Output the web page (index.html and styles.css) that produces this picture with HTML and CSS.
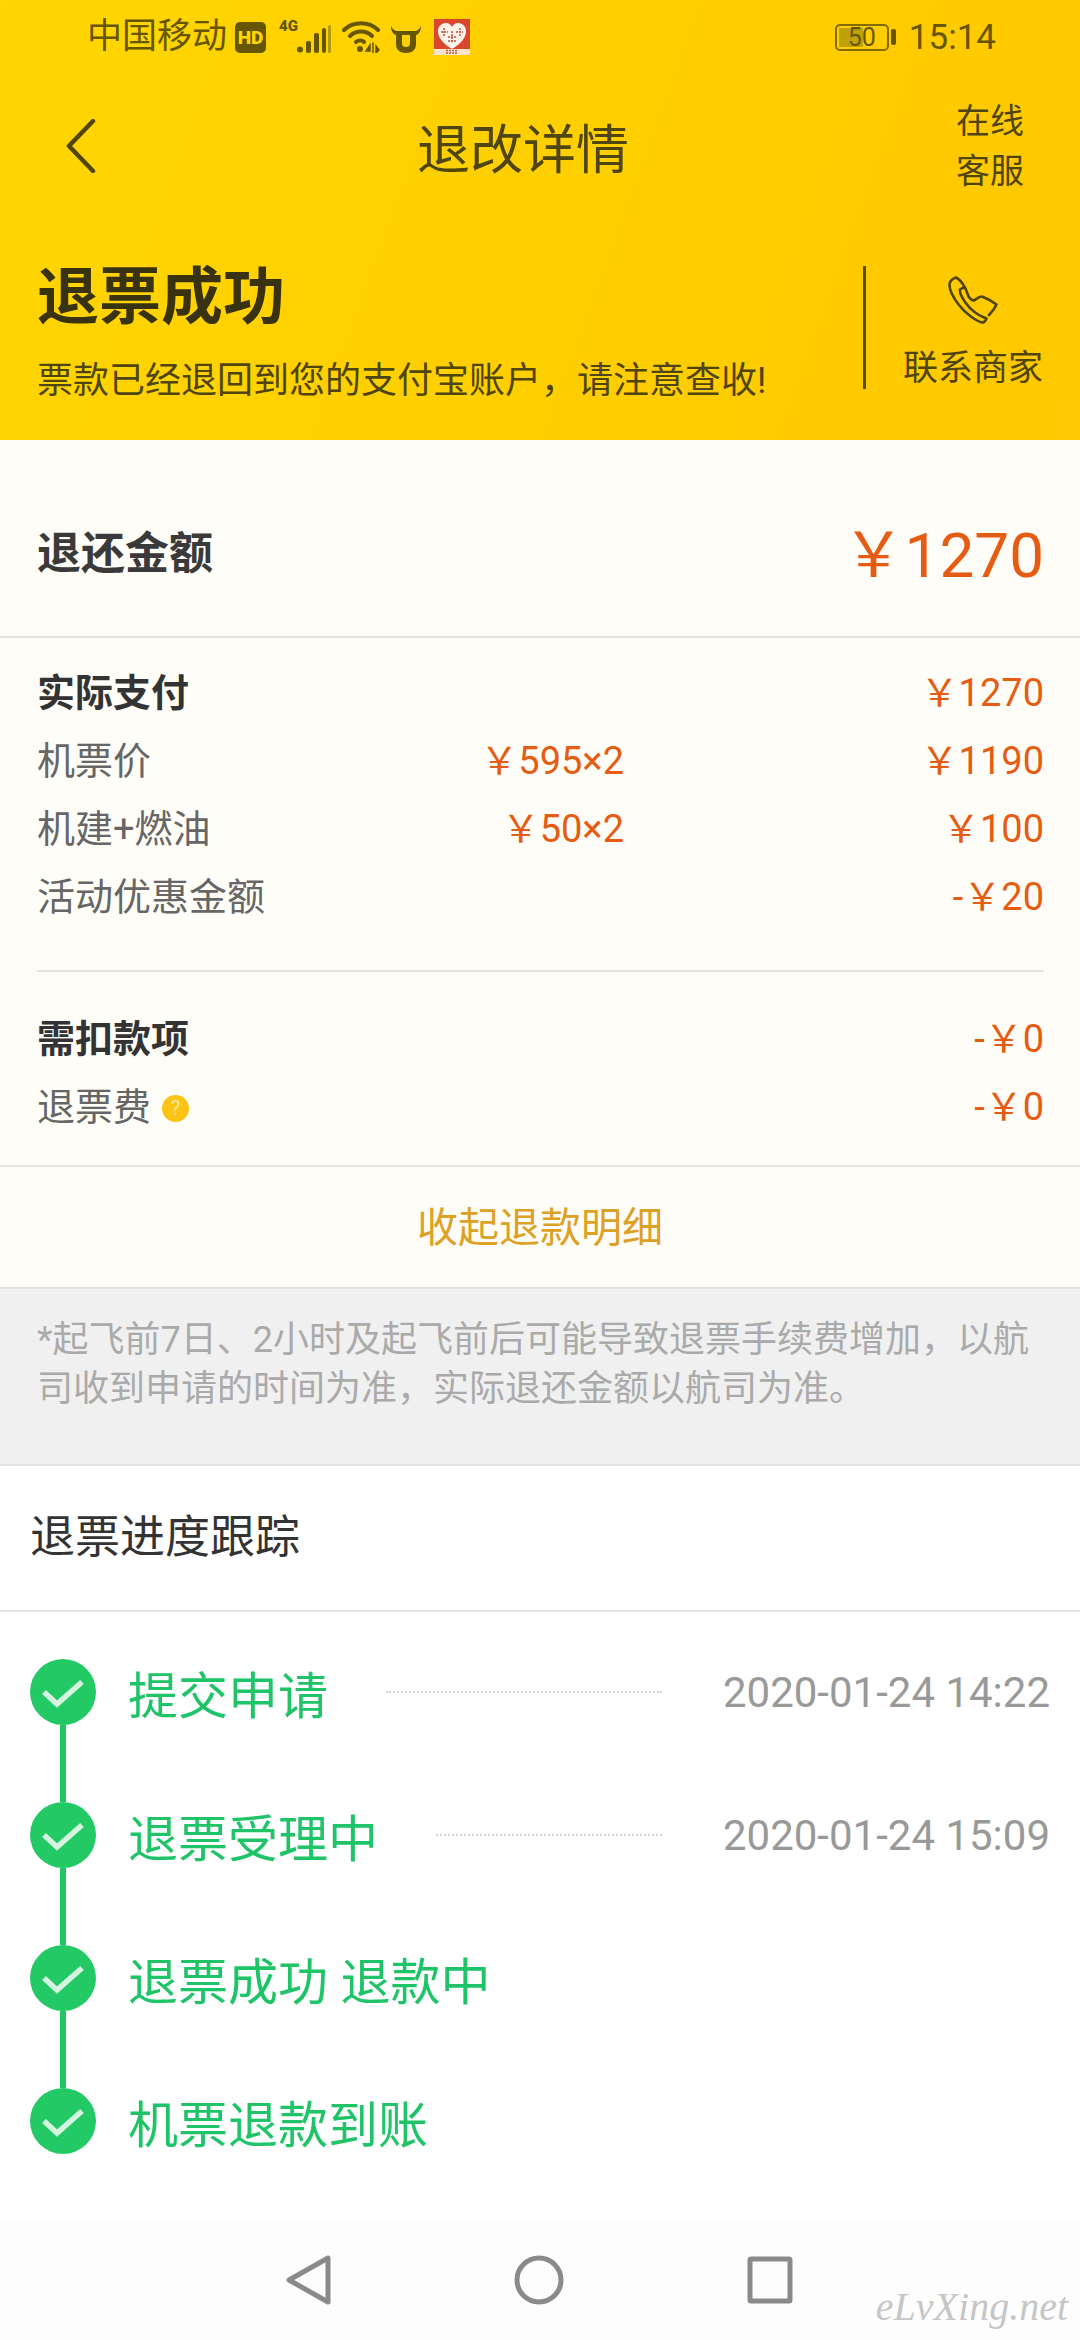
FILE: index.html

```html
<!DOCTYPE html>
<html lang="zh-CN">
<head>
  <meta charset="UTF-8" />
  <meta name="viewport" content="width=device-width, initial-scale=1.0"/>
  <title>退改详情</title>
  <link rel="stylesheet" href="styles.css">
</head>
<body>

  <header class="top">
    <div class="statusbar">
      <span class="carrier">中国移动</span>
      <span class="hd">HD</span>
      <span class="net">4G</span>
      <svg class="signal" width="34" height="28" viewBox="0 0 34 28">
        <circle cx="3" cy="24.5" r="3" fill="#665600"/>
        <rect x="9" y="16" width="5" height="12" rx="2" fill="#665600"/>
        <rect x="17" y="8" width="5" height="20" rx="2" fill="#665600"/>
        <rect x="25" y="3" width="4" height="25" rx="2" fill="#665600"/>
        <rect x="31" y="0" width="3" height="28" rx="1.5" fill="#b09a10"/>
      </svg>
      <svg class="wifi" width="38" height="32" viewBox="0 0 38 32" fill="none" stroke="#665600" stroke-width="4" stroke-linecap="round">
        <path d="M2 9C11 0 27 0 36 9"/>
        <path d="M8 15C14 9 24 9 30 15"/>
        <path d="M14 21C16.500 19 20 19 22 21" />
        <circle cx="18" cy="28" r="3" fill="#665600" stroke="none"/>
        <path d="M28 24l-4 6h4zM31 22v10M34 25l3 4-3 3z" fill="#665600" stroke-width="1.500"/>
      </svg>
      <svg class="cow" width="30" height="29" viewBox="0 0 30 29">
        <path d="M0 2C2 6 4 7 7 7H23C26 7 28 6 30 2C30 7 28 10 25 11V20C25 26 21 29 15 29S5 26 5 20V11C2 10 0 7 0 2ZM11 11V19C11 22 12.500 23 15 23S19 22 19 19V11Z" fill="#665600" fill-rule="evenodd"/>
      </svg>
      <svg class="app" width="36" height="36" viewBox="0 0 36 36">
        <rect width="36" height="36" fill="#d9482e"/>
        <rect y="30" width="36" height="6" fill="#fbe3cc"/>
        <path d="M18 30C8 24 4 18 4 12C4 7 8 4 12 4C15 4 17 6 18 8C19 6 21 4 24 4C28 4 32 7 32 12C32 18 28 24 18 30Z" fill="#fdf3ea"/>
        <path d="M10 9v8M7 13h7M26 9v8M22 13h7M18 12v12M14 18h8M14 22h8M12 31.500h12M12 34h12" stroke="#c4533f" stroke-width="1.500" fill="none" stroke-dasharray="2 1"/>
      </svg>
      <span class="battery"><span class="battery-level"></span><span class="battery-num">50</span></span>
      <span class="battery-nub"></span>
      <span class="clock">15:14</span>
    </div>

    <div class="toolbar">
      <svg class="back" width="30" height="54" viewBox="0 0 30 54" fill="none" stroke="#4f4510" stroke-width="4.500" stroke-linecap="round" stroke-linejoin="round">
        <path d="M27 2L3 27L27 52"/>
      </svg>
      <h1 class="page-title">退改详情</h1>
      <div class="service">在线<br>客服</div>
    </div>

    <div class="hero">
      <div class="hero-text">
        <h2>退票成功</h2>
        <p>票款已经退回到您的支付宝账户，请注意查收!</p>
      </div>
      <div class="hero-line"></div>
      <div class="contact">
        <svg width="50" height="48" viewBox="0 0 50 48" fill="none" stroke="#4f4510" stroke-width="2.600" stroke-linejoin="round" stroke-linecap="round">
          <path d="M8 1.500C5 2.500 1.500 5 1.500 9C1.500 14 4 20 11 29C18 38 28 45 34 46.500C36.500 47 37.500 45 38.500 42.500L35 41C32 40 23 35 17 26C13 20 11.500 16 12 13.500C13.500 12.500 15.500 11.500 16.500 11C14.500 7 11 3 8 1.500Z"/>
          <path d="M17 11.500L20 19C21 22 23 24 26 24.500C29 22.500 32 20 34 20.500C38 22 45 26 48.500 28.500C47 32 44 36 41 39"/>
        </svg>
        <span>联系商家</span>
      </div>
    </div>
  </header>

  <section class="refund">
    <span class="refund-label">退还金额</span>
    <span class="refund-value">￥1270</span>
  </section>

  <section class="detail">
    <div class="group">
      <div class="row row-head"><span>实际支付</span><span></span><span class="money">￥1270</span></div>
      <div class="row"><span>机票价</span><span class="money">￥595×2</span><span class="money">￥1190</span></div>
      <div class="row"><span>机建+燃油</span><span class="money">￥50×2</span><span class="money">￥100</span></div>
      <div class="row"><span>活动优惠金额</span><span></span><span class="money">-￥20</span></div>
    </div>
    <div class="group group-last">
      <div class="row row-head"><span>需扣款项</span><span></span><span class="money">-￥0</span></div>
      <div class="row"><span>退票费<i class="help">?</i></span><span></span><span class="money">-￥0</span></div>
    </div>
  </section>

  <div class="collapse">收起退款明细</div>

  <p class="note">*起飞前7日、2小时及起飞前后可能导致退票手续费增加，以航司收到申请的时间为准，实际退还金额以航司为准。</p>

  <main class="track">
    <div class="track-title">退票进度跟踪</div>
    <div class="steps">
      <div class="step">
        <div class="marker">
          <svg class="dot" width="66" height="66" viewBox="0 0 66 66"><circle cx="33" cy="33" r="33" fill="#22c964"/><path d="M14 33L27 45L52 23" fill="none" stroke="#d5f5e1" stroke-width="5.500"/></svg>
          <div class="connector"></div>
        </div>
        <div class="step-body">
          <span class="step-name">提交申请</span>
          <span class="dashes"></span>
          <span class="step-time">2020-01-24 14:22</span>
        </div>
      </div>
      <div class="step">
        <div class="marker">
          <svg class="dot" width="66" height="66" viewBox="0 0 66 66"><circle cx="33" cy="33" r="33" fill="#22c964"/><path d="M14 33L27 45L52 23" fill="none" stroke="#d5f5e1" stroke-width="5.500"/></svg>
          <div class="connector"></div>
        </div>
        <div class="step-body">
          <span class="step-name">退票受理中</span>
          <span class="dashes"></span>
          <span class="step-time">2020-01-24 15:09</span>
        </div>
      </div>
      <div class="step">
        <div class="marker">
          <svg class="dot" width="66" height="66" viewBox="0 0 66 66"><circle cx="33" cy="33" r="33" fill="#22c964"/><path d="M14 33L27 45L52 23" fill="none" stroke="#d5f5e1" stroke-width="5.500"/></svg>
          <div class="connector"></div>
        </div>
        <div class="step-body">
          <span class="step-name">退票成功 退款中</span>
        </div>
      </div>
      <div class="step step-last">
        <div class="marker">
          <svg class="dot" width="66" height="66" viewBox="0 0 66 66"><circle cx="33" cy="33" r="33" fill="#22c964"/><path d="M14 33L27 45L52 23" fill="none" stroke="#d5f5e1" stroke-width="5.500"/></svg>
        </div>
        <div class="step-body">
          <span class="step-name">机票退款到账</span>
        </div>
      </div>
    </div>
  </main>

  <nav class="navbar">
    <svg width="50" height="50" viewBox="0 0 50 50" fill="none" stroke="#8a8a8a" stroke-width="5" stroke-linejoin="round">
      <path d="M45 3V47L6 25Z" transform="translate(0 0)"/>
    </svg>
    <svg width="50" height="50" viewBox="0 0 50 50" fill="none" stroke="#8a8a8a" stroke-width="5">
      <circle cx="25" cy="25" r="22"/>
    </svg>
    <svg width="50" height="50" viewBox="0 0 50 50" fill="none" stroke="#8a8a8a" stroke-width="5" stroke-linejoin="round">
      <rect x="5" y="4" width="40" height="42" rx="1"/>
    </svg>
    <span class="watermark">eLvXing.net</span>
  </nav>

</body>
</html>
```

FILE: styles.css

```css
* {
  box-sizing: border-box;
}

html, body {
  height: 100%;
}

body {
  margin: 0;
  width: 1080px;
  height: 2340px;
  display: flex;
  flex-direction: column;
  font-family: Roboto, "Noto Sans CJK SC", sans-serif;
  background: #fff;
  color: #333;
  overflow: hidden;
}

/* yellow header */
.top {
  height: 440px;
  flex: none;
  background: linear-gradient(110deg, #ffd600, #ffc800);
  color: #4f4510;
}

.statusbar {
  height: 74px;
  display: flex;
  align-items: center;
  padding: 0 84px 0 87px;
  color: #665600;
}

.carrier {
  font-size: 35px;
  line-height: 74px;
}

.hd {
  width: 31px;
  height: 31px;
  margin-left: 8px;
  background: #665600;
  color: #ffd600;
  border-radius: 5px;
  font-size: 19px;
  font-weight: 900;
  line-height: 31px;
  text-align: center;
}

.net {
  align-self: flex-start;
  width: 18px;
  margin: 18px 0 0 13px;
  font-size: 15px;
  font-weight: 900;
  line-height: 16px;
}

.signal {
  margin: 4px 0 0 0;
}

.wifi {
  margin: 0 0 0 11px;
}

.cow {
  margin: 2px 0 0 11px;
}

.app {
  margin: 0 0 0 13px;
}

.battery {
  position: relative;
  width: 54px;
  height: 27px;
  margin-left: auto;
  border: 2px solid #806c00;
  border-radius: 5px;
  font-size: 25px;
  line-height: 23px;
  text-align: center;
}

.battery-level {
  position: absolute;
  left: 2px;
  top: 2px;
  bottom: 2px;
  width: 24px;
  background: #bfa208;
}

.battery-num {
  position: relative;
}

.battery-nub {
  width: 5px;
  height: 16px;
  margin-left: 2px;
  background: #665600;
  border-radius: 2px;
}

.clock {
  margin-left: 13px;
  font-size: 35px;
}

.toolbar {
  height: 144px;
  display: flex;
  align-items: center;
  justify-content: space-between;
  padding: 0 56px 0 66px;
}

.page-title {
  margin: 0 0 0 -6px;
  font-size: 53px;
  font-weight: 400;
}

.service {
  font-size: 34px;
  line-height: 50px;
}

.hero {
  display: flex;
}

.hero-text {
  width: 863px;
  padding: 40px 0 0 37px;
}

.hero-text h2 {
  margin: 0;
  font-size: 62px;
  font-weight: 700;
  line-height: 80px;
  color: #383211;
}

.hero-text p {
  margin: 18px 0 0;
  font-size: 36px;
  line-height: 50px;
}

.hero-line {
  width: 3px;
  height: 123px;
  margin-top: 48px;
  background: #564b10;
}

.contact {
  flex: 1;
  display: flex;
  flex-direction: column;
  align-items: center;
  padding-top: 58px;
  font-size: 35px;
  line-height: 50px;
}

.contact span {
  margin-top: 20px;
}

/* refund summary */
.refund {
  height: 198px;
  flex: none;
  display: flex;
  align-items: center;
  justify-content: space-between;
  padding: 24px 36px 0 37px;
  background: #fffdf7;
  border-bottom: 2px solid #e6e4de;
}

.refund-label {
  font-size: 44px;
  font-weight: 700;
  color: #3a3a3a;
}

.refund-value {
  font-size: 62px;
  color: #e65c12;
}

.detail {
  flex: none;
  background: #fffdf7;
  border-bottom: 2px solid #e6e4de;
  padding: 17px 36px 0 37px;
}

.group {
  padding-bottom: 43px;
  border-bottom: 2px solid #e6e4de;
}

.group-last {
  border-bottom: 0;
  padding: 29px 0 28px;
}

.row {
  display: grid;
  grid-template-columns: 1fr 300px 420px;
  height: 68px;
  align-items: center;
  font-size: 38px;
  color: #666;
}

.row-head {
  font-weight: 700;
  color: #333;
}

.money {
  text-align: right;
  font-weight: 400;
  color: #e65c12;
}

.help {
  display: inline-block;
  width: 27px;
  height: 27px;
  margin-left: 11px;
  border-radius: 50%;
  background: #fcc214;
  color: #ffe9a0;
  font-size: 20px;
  font-style: normal;
  line-height: 27px;
  text-align: center;
  vertical-align: 5px;
}

.collapse {
  height: 122px;
  flex: none;
  padding-top: 1px;
  background: #fffdf7;
  border-bottom: 2px solid #e2e1de;
  color: #dca125;
  font-size: 41px;
  line-height: 120px;
  text-align: center;
}

.note {
  height: 177px;
  flex: none;
  margin: 0;
  padding: 27px 37px 0;
  background: #f0f0f0;
  border-bottom: 2px solid #e2e2e2;
  color: #aaa;
  font-size: 36px;
  line-height: 49px;
}

/* progress */
.track {
  flex: 1;
}

.track-title {
  height: 146px;
  padding-left: 30px;
  border-bottom: 2px solid #e2e2e2;
  color: #333;
  font-size: 45px;
  line-height: 144px;
}

.steps {
  padding: 47px 30px 0;
}

.step {
  display: flex;
  height: 143px;
}

.step-last {
  height: 66px;
}

.marker {
  width: 66px;
  flex: none;
  display: flex;
  flex-direction: column;
  align-items: center;
}

.dot {
  display: block;
  flex: none;
}

.connector {
  flex: 1;
  width: 6px;
  background: #1fc763;
}

.step-body {
  flex: 1;
  height: 66px;
  display: flex;
  align-items: center;
  margin-left: 32px;
}

.step-name {
  font-size: 50px;
  color: #1ec467;
  white-space: nowrap;
}

.dashes {
  flex: 1;
  margin: 0 61px 0 58px;
  border-top: 2px dotted #d2d2d2;
}

.step-time {
  font-size: 42px;
  color: #999;
  white-space: nowrap;
}

/* bottom nav */
.navbar {
  position: relative;
  height: 120px;
  flex: none;
  display: flex;
  align-items: center;
  justify-content: center;
  gap: 181px;
  padding-right: 2px;
  background: #fdfdfd;
}

.watermark {
  position: absolute;
  right: 12px;
  bottom: 10px;
  font-family: "Liberation Serif", serif;
  font-size: 40px;
  font-style: italic;
  color: #c6c6c6;
}
```
